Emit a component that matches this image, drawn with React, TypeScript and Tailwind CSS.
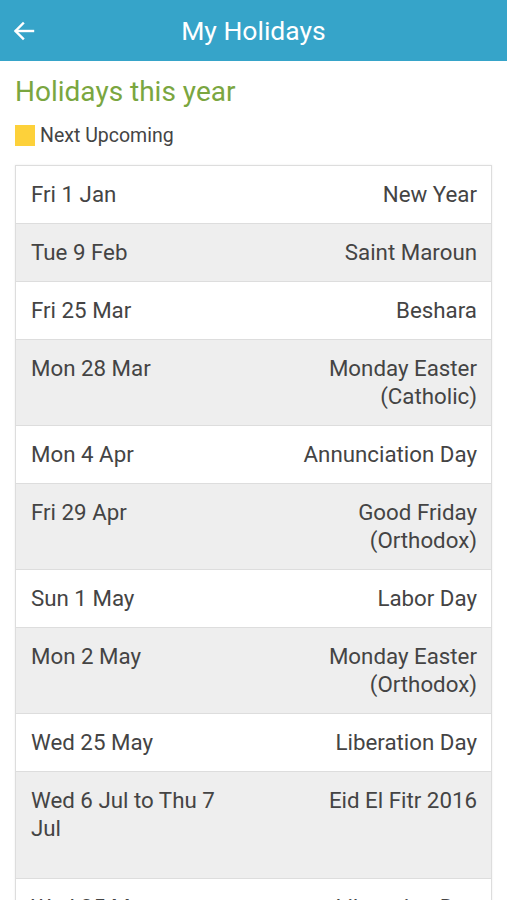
import React from 'react';

const holidays = [
  { date: 'Fri 1 Jan', name: 'New Year' },
  { date: 'Tue 9 Feb', name: 'Saint Maroun' },
  { date: 'Fri 25 Mar', name: 'Beshara' },
  { date: 'Mon 28 Mar', name: 'Monday Easter (Catholic)' },
  { date: 'Mon 4 Apr', name: 'Annunciation Day' },
  { date: 'Fri 29 Apr', name: 'Good Friday (Orthodox)' },
  { date: 'Sun 1 May', name: 'Labor Day' },
  { date: 'Mon 2 May', name: 'Monday Easter (Orthodox)' },
  { date: 'Wed 25 May', name: 'Liberation Day' },
  { date: 'Wed 6 Jul to Thu 7 Jul', name: 'Eid El Fitr 2016', tall: true },
  { date: 'Wed 25 May', name: 'Liberation Day' },
];

const App = () => {
  return (
    <div className="min-h-[900px] bg-white font-['Roboto',sans-serif]">
      <div className="flex h-[61px] items-center bg-[#36a4c9] px-3 relative">
        <svg width="24" height="24" viewBox="0 0 24 24" fill="none" stroke="white" strokeWidth="2.4" strokeLinecap="square">
          <path d="M21 12H4" />
          <path d="M11 4.5L3.5 12l7.5 7.5" />
        </svg>
        <h1 className="absolute inset-x-0 text-center text-[26.5px] text-white pointer-events-none">My Holidays</h1>
      </div>
      <div className="px-[15px]">
        <h2 className="mt-[13px] text-[28px] leading-[36px] text-[#7aa640]">Holidays this year</h2>
        <div className="mt-[11px] flex items-center gap-[5px]">
          <span className="h-[21px] w-[20px] bg-[#fdd13a]" />
          <span className="text-[19.5px] text-[#444]">Next Upcoming</span>
        </div>
        <div className="mt-[15px] border-t border-x border-[#dddddd] shadow-[0_0_2px_rgba(0,0,0,0.08)]">
          {holidays.map((h, i) => (
            <div
              key={i}
              className={`flex justify-between gap-8 border-b border-[#dddddd] pl-[15px] pr-[14px] pt-[14px] text-[22.3px] leading-[28px] text-[#444] ${
                i % 2 === 1 ? 'bg-[#eeeeee]' : 'bg-white'
              } ${h.tall ? 'pb-[36px]' : 'pb-[15px]'}`}
            >
              <span className={h.tall ? 'max-w-[200px]' : 'whitespace-nowrap'}>{h.date}</span>
              <span className="max-w-[200px] text-right">{h.name}</span>
            </div>
          ))}
        </div>
      </div>
    </div>
  );
};

export default App;
